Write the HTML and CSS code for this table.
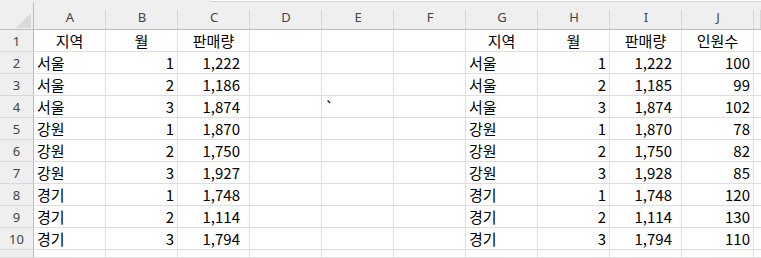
FILE: index.html
```html
<!DOCTYPE html>
<html lang="ko">
<head>
<meta charset="utf-8">
<title>Sheet</title>
<link rel="stylesheet" href="styles.css">
</head>
<body>
<div class="topbar"><div class="tb-left"></div><div class="tb-right"></div></div>
<div class="sheet">
  <div class="corner"><svg class="tri" width="15" height="15" viewBox="0 0 15 15"><polygon points="15,0 15,15 0,15" fill="#d9d9d9"/></svg></div>
  <div class="hdr">A</div><div class="hdr">B</div><div class="hdr">C</div><div class="hdr">D</div><div class="hdr">E</div><div class="hdr">F</div><div class="hdr">G</div><div class="hdr">H</div><div class="hdr">I</div><div class="hdr">J</div><div class="hdr last"></div>

  <div class="rh">1</div><div class="c m">지역</div><div class="c m">월</div><div class="c m">판매량</div><div class="c"></div><div class="c"></div><div class="c"></div><div class="c m">지역</div><div class="c m">월</div><div class="c m">판매량</div><div class="c m">인원수</div><div class="c last"></div>

  <div class="rh">2</div><div class="c t">서울</div><div class="c n">1</div><div class="c n acc">1,222</div><div class="c"></div><div class="c"></div><div class="c"></div><div class="c t">서울</div><div class="c n">1</div><div class="c n acc">1,222</div><div class="c n">100</div><div class="c last"></div>

  <div class="rh">3</div><div class="c t">서울</div><div class="c n">2</div><div class="c n acc">1,186</div><div class="c"></div><div class="c"></div><div class="c"></div><div class="c t">서울</div><div class="c n">2</div><div class="c n acc">1,185</div><div class="c n">99</div><div class="c last"></div>

  <div class="rh">4</div><div class="c t">서울</div><div class="c n">3</div><div class="c n acc">1,874</div><div class="c"></div><div class="c t">`</div><div class="c"></div><div class="c t">서울</div><div class="c n">3</div><div class="c n acc">1,874</div><div class="c n">102</div><div class="c last"></div>

  <div class="rh">5</div><div class="c t">강원</div><div class="c n">1</div><div class="c n acc">1,870</div><div class="c"></div><div class="c"></div><div class="c"></div><div class="c t">강원</div><div class="c n">1</div><div class="c n acc">1,870</div><div class="c n">78</div><div class="c last"></div>

  <div class="rh">6</div><div class="c t">강원</div><div class="c n">2</div><div class="c n acc">1,750</div><div class="c"></div><div class="c"></div><div class="c"></div><div class="c t">강원</div><div class="c n">2</div><div class="c n acc">1,750</div><div class="c n">82</div><div class="c last"></div>

  <div class="rh">7</div><div class="c t">강원</div><div class="c n">3</div><div class="c n acc">1,927</div><div class="c"></div><div class="c"></div><div class="c"></div><div class="c t">강원</div><div class="c n">3</div><div class="c n acc">1,928</div><div class="c n">85</div><div class="c last"></div>

  <div class="rh">8</div><div class="c t">경기</div><div class="c n">1</div><div class="c n acc">1,748</div><div class="c"></div><div class="c"></div><div class="c"></div><div class="c t">경기</div><div class="c n">1</div><div class="c n acc">1,748</div><div class="c n">120</div><div class="c last"></div>

  <div class="rh">9</div><div class="c t">경기</div><div class="c n">2</div><div class="c n acc">1,114</div><div class="c"></div><div class="c"></div><div class="c"></div><div class="c t">경기</div><div class="c n">2</div><div class="c n acc">1,114</div><div class="c n">130</div><div class="c last"></div>

  <div class="rh">10</div><div class="c t">경기</div><div class="c n">3</div><div class="c n acc">1,794</div><div class="c"></div><div class="c"></div><div class="c"></div><div class="c t">경기</div><div class="c n">3</div><div class="c n acc">1,794</div><div class="c n">110</div><div class="c last"></div>

  <div class="rh"></div><div class="c"></div><div class="c"></div><div class="c"></div><div class="c"></div><div class="c"></div><div class="c"></div><div class="c"></div><div class="c"></div><div class="c"></div><div class="c"></div><div class="c last"></div>
</div>
</body>
</html>
```
FILE: styles.css
```css
html, body {
  margin: 0;
  padding: 0;
  background: #ffffff;
  width: 761px;
  height: 258px;
  overflow: hidden;
}

.topbar {
  display: flex;
  height: 2px;
}
.tb-left {
  width: 210px;
  background: #efefef;
}
.tb-right {
  flex: 1;
  background: #ffffff;
  border-bottom: 1px solid #d2d2d2;
}

.sheet {
  display: grid;
  grid-template-columns: 34px repeat(10, 72px) 1fr;
  grid-template-rows: 28px repeat(10, 22px) 8px;
  font-family: "Noto Sans CJK KR", "Noto Sans", sans-serif;
  font-size: 15px;
  color: #000;
}

.corner {
  background: #efefef;
  border-right: 1px solid #bdbdbd;
  border-bottom: 1px solid #bdbdbd;
  box-sizing: border-box;
  display: flex;
  align-items: flex-end;
  justify-content: flex-end;
  padding: 0 2px 1px 0;
}
.tri {
  display: block;
}

.hdr {
  box-sizing: border-box;
  background: #efefef linear-gradient(#d6d6d6, #d6d6d6) no-repeat right bottom / 1px 19px;
  border-bottom: 1px solid #bdbdbd;
  font-family: "Noto Sans", "Open Sans", sans-serif;
  font-size: 13px;
  color: #444;
  display: flex;
  align-items: center;
  justify-content: center;
  padding-top: 3px;
}

.rh {
  box-sizing: border-box;
  background: #efefef;
  border-right: 1px solid #bdbdbd;
  border-bottom: 1px solid #dadada;
  font-family: "Noto Sans", "Open Sans", sans-serif;
  font-size: 13px;
  color: #444;
  display: flex;
  align-items: center;
  justify-content: center;
}

.c {
  box-sizing: border-box;
  border-right: 1px solid #dedede;
  border-bottom: 1px solid #dedede;
  display: flex;
  align-items: center;
  white-space: nowrap;
  overflow: visible;
  line-height: 1;
}
.c.t {
  justify-content: flex-start;
  padding-left: 3px;
}
.c.n {
  justify-content: flex-end;
  padding-right: 3px;
}
.c.n.acc {
  padding-right: 9px;
}
.c.m {
  justify-content: center;
}
.last {
  border-right: none;
}
```
